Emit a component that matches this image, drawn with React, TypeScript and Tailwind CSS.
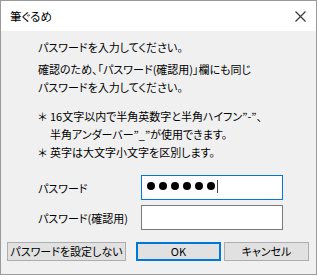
const font = "font-['Noto_Sans_CJK_JP','Noto_Sans',sans-serif] [font-feature-settings:'palt']";

export default function App() {
  return (
    <div className={"w-[318px] h-[277px] bg-white text-black text-[11px] leading-[18px] " + font}>
      <div className="w-[317px] h-[275px] border border-[#9a9a9a] bg-[#f0f0f0] flex flex-col">
        {/* title bar */}
        <div className="h-[30px] bg-white flex items-center justify-between pl-[9px] pr-[9px] shrink-0">
          <span className="text-[11.5px]">筆ぐるめ</span>
          <svg width="11" height="11" viewBox="0 0 11 11" className="mr-[1px]">
            <path d="M0.5 0.5 L10.5 10.5 M10.5 0.5 L0.5 10.5" stroke="#333" strokeWidth="1.1" />
          </svg>
        </div>

        {/* body */}
        <div className="flex-1 flex flex-col pt-[7px]">
          <div className="pl-[37px]">
            <p>パスワードを入力してください。</p>
            <p className="mt-[4px]">
              確認のため、「パスワード(確認用)」欄にも同じ
              <br />
              パスワードを入力してください。
            </p>
            <div className="mt-[11px]">
              <div className="flex">
                <span className="w-[12px] shrink-0">＊</span>
                <span>
                  16文字以内で半角英数字と半角ハイフン”-”、
                  <br />
                  半角アンダーバー”_”が使用できます。
                </span>
              </div>
              <div className="flex">
                <span className="w-[12px] shrink-0">＊</span>
                <span>英字は大文字小文字を区別します。</span>
              </div>
            </div>

            <div className="mt-[14px] flex flex-col gap-[5px]">
              <div className="flex items-center">
                <span className="w-[103px]">パスワード</span>
                <div className="w-[142px] h-[25px] bg-white border border-[#0078d7] flex items-center pl-[5px] gap-[4px]">
                  {[0, 1, 2, 3, 4, 5].map((i) => (
                    <span key={i} className="w-[8px] h-[8px] rounded-full bg-black -mt-[3px]" />
                  ))}
                  <span className="w-[1px] h-[13px] bg-[#444] -ml-[2px] -mt-[2px]" />
                </div>
              </div>
              <div className="flex items-center">
                <span className="w-[103px]">パスワード(確認用)</span>
                <div className="w-[142px] h-[25px] bg-white border border-[#7a7a7a]" />
              </div>
            </div>
          </div>

          <div className="mt-[12px] ml-[6px] flex">
            <button className="w-[119px] h-[19px] bg-[#e1e1e1] border border-[#adadad] flex items-center justify-center leading-none whitespace-nowrap">
              パスワードを設定しない
            </button>
            <button className="ml-[10px] w-[85px] h-[19px] bg-[#e1e1e1] border-2 border-[#0078d7] flex items-center justify-center leading-none">
              OK
            </button>
            <button className="ml-[3px] w-[85px] h-[19px] bg-[#e1e1e1] border border-[#adadad] flex items-center justify-center leading-none">
              キャンセル
            </button>
          </div>
        </div>
      </div>
    </div>
  );
}
